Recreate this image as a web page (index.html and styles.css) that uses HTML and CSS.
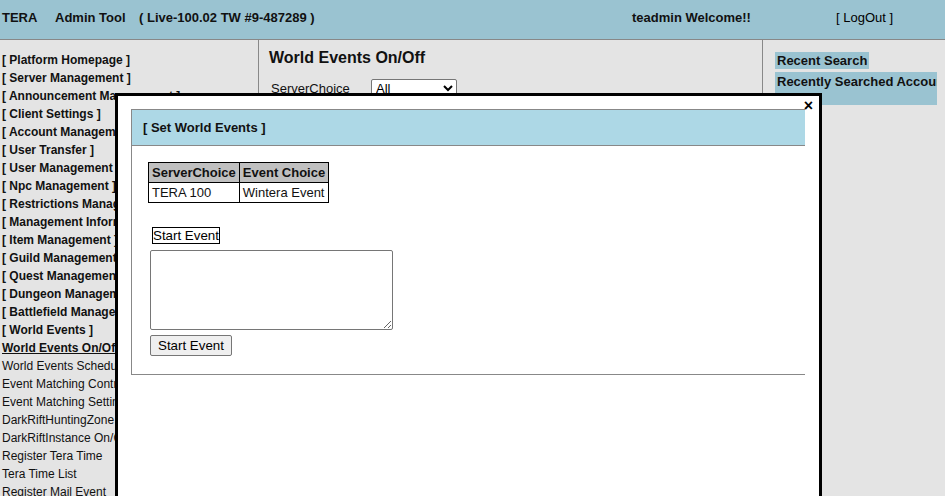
FILE: index.html
```html
<!DOCTYPE html>
<html>
<head>
<meta charset="utf-8">
<link rel="stylesheet" href="styles.css">
</head>
<body>
<div class="header">
  <span class="brand">TERA</span><span class="tool">Admin Tool</span><span class="ver">( Live-100.02 TW #9-487289 )</span><span class="welcome">teadmin Welcome!!</span><span class="logout">[ LogOut ]</span>
</div>
<div class="main">
  <div class="sidebar">
    <div class="mi b">[ Platform Homepage ]</div>
    <div class="mi b">[ Server Management ]</div>
    <div class="mi b">[ Announcement Management ]</div>
    <div class="mi b">[ Client Settings ]</div>
    <div class="mi b">[ Account Management ]</div>
    <div class="mi b">[ User Transfer ]</div>
    <div class="mi b">[ User Management ]</div>
    <div class="mi b">[ Npc Management ]</div>
    <div class="mi b">[ Restrictions Management ]</div>
    <div class="mi b">[ Management Information ]</div>
    <div class="mi b">[ Item Management ]</div>
    <div class="mi b">[ Guild Management ]</div>
    <div class="mi b">[ Quest Management ]</div>
    <div class="mi b">[ Dungeon Management ]</div>
    <div class="mi b">[ Battlefield Management ]</div>
    <div class="mi b">[ World Events ]</div>
    <div class="mi b u">World Events On/Off</div>
    <div class="mi">World Events Schedule</div>
    <div class="mi">Event Matching Control</div>
    <div class="mi">Event Matching Settings</div>
    <div class="mi">DarkRiftHuntingZone On/Off</div>
    <div class="mi">DarkRiftInstance On/Off</div>
    <div class="mi">Register Tera Time</div>
    <div class="mi">Tera Time List</div>
    <div class="mi">Register Mail Event</div>
  </div>
  <div class="content">
    <div class="title">World Events On/Off</div>
    <div class="row">
      <span class="lbl">ServerChoice</span>
      <select class="sel"><option>All</option></select>
    </div>
  </div>
  <div class="right">
    <span class="rs">Recent Search</span>
    <div class="rsa">Recently Searched Account</div>
  </div>
</div>
<div class="modal">
  <span class="close">×</span>
  <div class="panel">
    <div class="panel-head">[ Set World Events ]</div>
    <div class="panel-body">
      <table class="tbl">
        <tr><th>ServerChoice</th><th>Event Choice</th></tr>
        <tr><td>TERA 100</td><td>Wintera Event</td></tr>
      </table>
      <div class="tag">Start Event</div>
      <textarea class="ta"></textarea>
      <div><button class="btn">Start Event</button></div>
    </div>
  </div>
</div>
</body>
</html>
```
FILE: styles.css
```css
html, body {
  margin: 0;
  padding: 0;
  background: #e4e4e4;
  font-family: "Liberation Sans", Arial, sans-serif;
  color: #111;
  overflow: hidden;
}
.header {
  height: 29px;
  padding-top: 10px;
  background: #9ac3d1;
  border-bottom: 1px solid #888;
  font-size: 13px;
  font-weight: bold;
  white-space: nowrap;
  display: flex;
}
.brand { width: 53px; padding-left: 2px; }
.tool { width: 84px; }
.ver { width: 493px; }
.welcome { width: 204px; }
.logout { font-weight: normal; color: #000; }
.main {
  display: grid;
  grid-template-columns: 259px 504px 1fr;
  min-height: calc(100vh - 40px);
}
.sidebar {
  border-right: 1px solid #888;
  padding-top: 11px;
  padding-left: 2px;
  overflow: hidden;
  white-space: nowrap;
}
.mi {
  font-size: 12px;
  line-height: 18px;
}
.b { font-weight: bold; }
.u { text-decoration: underline; }
.content {
  border-right: 1px solid #888;
  padding: 9px 0 0 10px;
}
.title {
  font-size: 16px;
  font-weight: bold;
}
.row {
  margin-top: 12px;
  display: flex;
  align-items: center;
  font-size: 13px;
  padding-left: 2px;
}
.lbl { width: 100px; }
.sel {
  width: 86px;
  height: 19px;
  font-size: 13px;
  font-family: "Liberation Sans", Arial, sans-serif;
  border: 1px solid #767676;
  border-radius: 2px;
  background: #fff;
  margin: 0;
}
.right {
  padding: 12px 0 0 12px;
  font-size: 13px;
  font-weight: bold;
}
.rs {
  display: inline-block;
  background: #9ac3d1;
  padding: 1px 2px 0 2px;
  line-height: 16px;
}
.rsa {
  margin-top: 3px;
  width: 160px;
  height: 31px;
  padding-left: 2px;
  padding-top: 2px;
  box-sizing: content-box;
  background: #9ac3d1;
  overflow: hidden;
  white-space: nowrap;
  line-height: 16px;
}
.modal {
  position: absolute;
  left: 115px;
  top: 93px;
  width: 701px;
  height: 420px;
  background: #fff;
  border: 3px solid #000;
}
.close {
  position: absolute;
  top: 2px;
  right: 6px;
  font-size: 16px;
  font-weight: bold;
  line-height: 16px;
  color: #000;
}
.panel {
  margin: 13px 0 0 13px;
  width: 673px;
  border-top: 1px solid #888;
  border-left: 1px solid #888;
  border-bottom: 1px solid #888;
}
.panel-head {
  height: 35px;
  line-height: 35px;
  background: #add8e6;
  border-bottom: 1px solid #888;
  padding-left: 11px;
  font-size: 13px;
  font-weight: bold;
}
.panel-body {
  padding: 16px 16px 18px 16px;
}
.tbl {
  border-collapse: collapse;
  font-size: 13px;
}
.tbl th, .tbl td {
  border: 1px solid #000;
  padding: 2px 3px;
  line-height: 15px;
  text-align: left;
}
.tbl th {
  background: #c0c0c0;
}
.tag {
  display: inline-block;
  margin: 24px 0 0 4px;
  border: 1px solid #000;
  font-size: 13.33px;
  line-height: 15px;
  color: #000;
}
.ta {
  display: block;
  margin: 6px 0 0 2px;
  width: 243px;
  height: 80px;
  box-sizing: border-box;
  border: 1px solid #767676;
  border-radius: 2px;
  resize: both;
}
.btn {
  margin: 5px 0 0 2px;
  font-family: "Liberation Sans", Arial, sans-serif;
  font-size: 13.33px;
  line-height: 15px;
  padding: 2px 7px;
  background: #efefef;
  border: 1px solid #767676;
  border-radius: 2px;
  color: #000;
}
```
